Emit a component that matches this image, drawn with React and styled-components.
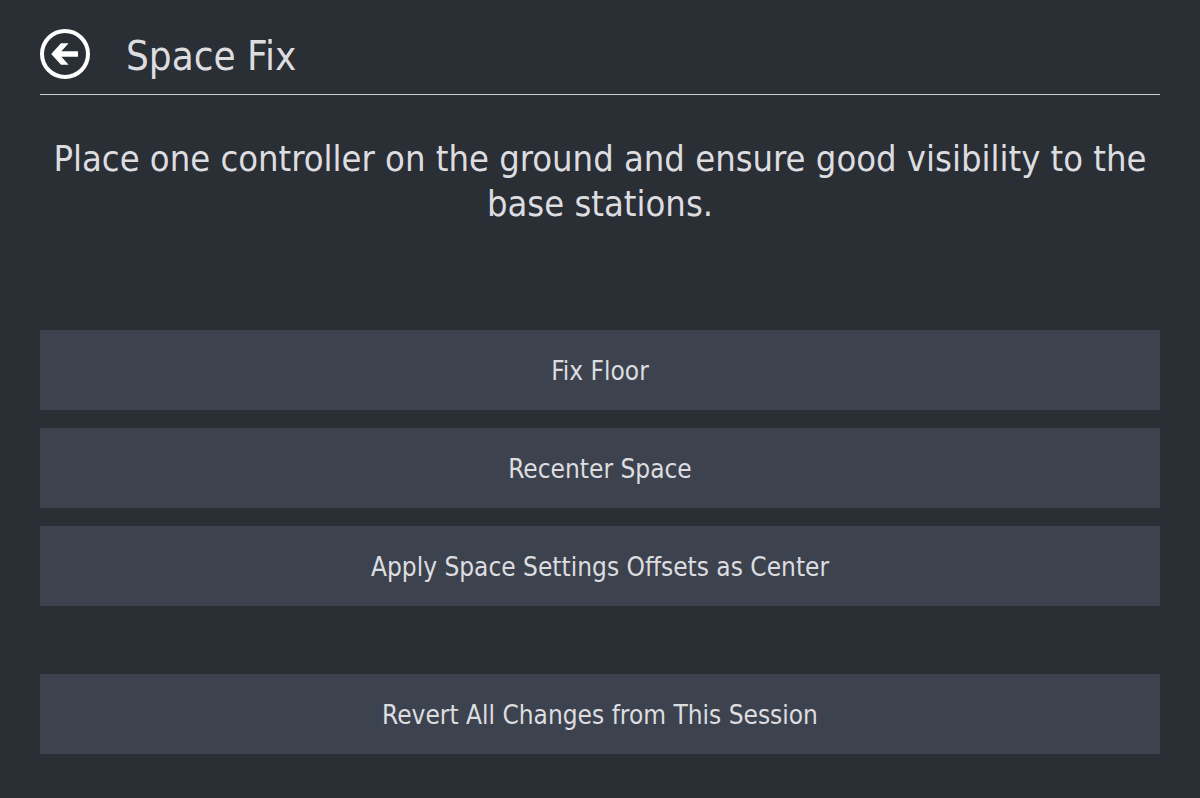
import React from "react";
import styled, { createGlobalStyle } from "styled-components";

const GlobalStyle = createGlobalStyle`
  *, *::before, *::after { box-sizing: border-box; }
  body {
    margin: 0;
    background: #2a2e35;
    color: #dddde0;
    font-family: Tahoma, "DejaVu Sans Condensed", "Noto Sans", sans-serif;
  }
`;

const Page = styled.main`
  min-height: 100vh;
  padding: 24px 40px 44px;
`;

const Header = styled.header`
  display: flex;
  align-items: center;
  gap: 36px;
  padding-bottom: 10px;
  border-bottom: 1px solid #cccccc;
`;

const BackButton = styled.button`
  display: flex;
  padding: 0;
  border: 0;
  background: none;
  color: #ffffff;
  cursor: pointer;
`;

const Title = styled.h1`
  margin: 0;
  padding-top: 4px;
  font-size: 40px;
  line-height: 56px;
  font-weight: 400;
`;

const Message = styled.p`
  min-height: 194px;
  margin: 41px 0 0;
  font-size: 36px;
  line-height: 45px;
  text-align: center;
`;

const Actions = styled.div`
  display: flex;
  flex-direction: column;
  gap: 18px;
  margin-bottom: 68px;
`;

const ActionButton = styled.button`
  display: block;
  width: 100%;
  min-height: 80px;
  padding: 2px 0 0;
  border: 0;
  background: #3d434e;
  color: inherit;
  font-family: inherit;
  font-size: 26px;
  line-height: 36px;
  cursor: pointer;
  &:hover { background: #4b515e; }
`;

const actions = ["Fix Floor", "Recenter Space", "Apply Space Settings Offsets as Center"];

export default function App() {
  return (
    <Page>
      <GlobalStyle />
      <Header>
        <BackButton type="button" aria-label="Back">
          <svg width="50" height="50" viewBox="0 0 50 50" aria-hidden="true">
            <circle cx="25" cy="25" r="23" fill="none" stroke="currentColor" strokeWidth="4" />
            <path d="M11.2 25 21 14.2H28.6L21.4 22.2H38V27.8H21.4L28.6 35.8H21Z" fill="currentColor" />
          </svg>
        </BackButton>
        <Title>Space Fix</Title>
      </Header>
      <Message>
        Place one controller on the ground and ensure good visibility to the base stations.
      </Message>
      <Actions>
        {actions.map((label) => (
          <ActionButton type="button" key={label}>{label}</ActionButton>
        ))}
      </Actions>
      <ActionButton type="button">Revert All Changes from This Session</ActionButton>
    </Page>
  );
}
